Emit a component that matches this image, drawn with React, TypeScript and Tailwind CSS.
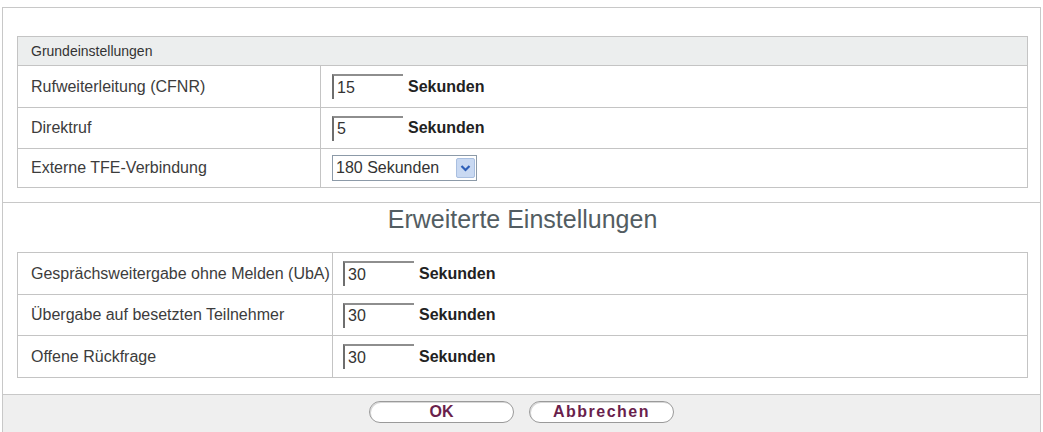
import React from "react";

type Row = { label: string; value: string; h: string };

const basic: Row[] = [
  { label: "Rufweiterleitung (CFNR)", value: "15", h: "h-[42px]" },
  { label: "Direktruf", value: "5", h: "h-[41px]" },
];

const advanced: Row[] = [
  { label: "Gesprächsweitergabe ohne Melden (UbA)", value: "30", h: "h-[42px]" },
  { label: "Übergabe auf besetzten Teilnehmer", value: "30", h: "h-[41px]" },
  { label: "Offene Rückfrage", value: "30", h: "h-[42px]" },
];

function SecondsInput({ value }: { value: string }) {
  return (
    <div className="flex items-center">
      <div className="flex h-[25px] w-[71px] items-center border-t-2 border-l-2 border-t-[#8e8e8e] border-l-[#6e6e6e] bg-white pl-[3px] text-[16px] text-[#333]">
        {value}
      </div>
      <span className="ml-[5px] text-[16px] font-bold text-[#222]">Sekunden</span>
    </div>
  );
}

function Chevron() {
  return (
    <svg width="11" height="8" viewBox="0 0 11 8">
      <path d="M1.5 2 L5.5 6 L9.5 2" fill="none" stroke="#2e5fb8" strokeWidth="2.2" />
    </svg>
  );
}

function FieldRow({ label, h, labelWidth, pad, children }: { label: string; h: string; labelWidth: string; pad: string; children: React.ReactNode }) {
  return (
    <div className={`flex ${h} border-t border-[#c4c4c4]`}>
      <div className={`${labelWidth} flex items-center border-r border-[#c4c4c4] pl-[13px] text-[16px] text-[#3c3c3c]`}>{label}</div>
      <div className={`flex flex-1 items-center ${pad}`}>{children}</div>
    </div>
  );
}

export default function App() {
  return (
    <div className="h-[432px] w-[1043px] bg-white" style={{ fontFamily: '"Liberation Sans", Arial, sans-serif' }}>
      <div className="ml-[2px] mt-[7px] flex h-[425px] w-[1039px] flex-col border border-b-0 border-[#c8c8c8]">
        <div className="pb-[14px] pl-[14px] pr-[12px] pt-[28px]">
          <div className="border border-t-0 border-[#c4c4c4]">
            <div className="flex h-[29px] items-center border-t border-[#c4c4c4] bg-[#eceeee] pl-[13px] text-[14px] text-[#333]">
              Grundeinstellungen
            </div>
            {basic.map((r) => (
              <FieldRow key={r.label} label={r.label} h={r.h} labelWidth="w-[303px]" pad="pl-[11px]">
                <SecondsInput value={r.value} />
              </FieldRow>
            ))}
            <FieldRow label="Externe TFE-Verbindung" h="h-[39px]" labelWidth="w-[303px]" pad="pl-[11px]">
              <div className="flex h-[26px] w-[145px] items-center justify-between border border-[#8c9aa8] bg-white pl-[3px] pr-[1px] text-[16px] text-[#333]">
                <span>180 Sekunden</span>
                <span className="flex h-[20px] w-[19px] items-center justify-center rounded-[2px] border border-[#a9bfe0] bg-[#c9d9f2]">
                  <Chevron />
                </span>
              </div>
            </FieldRow>
          </div>
        </div>

        <div className="border-t border-[#c8c8c8] pl-[14px] pr-[12px]">
          <div className="flex h-[49px] items-start justify-center pt-[2px] text-[25px] leading-[29px] text-[#535d62]">Erweiterte Einstellungen</div>
          <div className="border border-t-0 border-[#c4c4c4]">
            {advanced.map((r) => (
              <FieldRow key={r.label} label={r.label} h={r.h} labelWidth="w-[315px]" pad="pl-[10px]">
                <SecondsInput value={r.value} />
              </FieldRow>
            ))}
          </div>
        </div>

        <div className="mt-[16px] flex flex-1 items-start justify-center gap-[15px] border-t border-[#c8c8c8] bg-[#efefef] pt-[6px]">
          <button className="flex h-[22px] w-[145px] items-center justify-center rounded-full border border-[#9a9a9a] bg-white text-[16px] font-bold text-[#6a1f4c] shadow-[inset_1px_1px_0_#d8d8d8]">
            OK
          </button>
          <button className="flex h-[22px] w-[145px] items-center justify-center rounded-full border border-[#9a9a9a] bg-white text-[16px] font-bold tracking-[1.5px] text-[#6a1f4c] shadow-[inset_1px_1px_0_#d8d8d8]">
            Abbrechen
          </button>
        </div>
      </div>
    </div>
  );
}
